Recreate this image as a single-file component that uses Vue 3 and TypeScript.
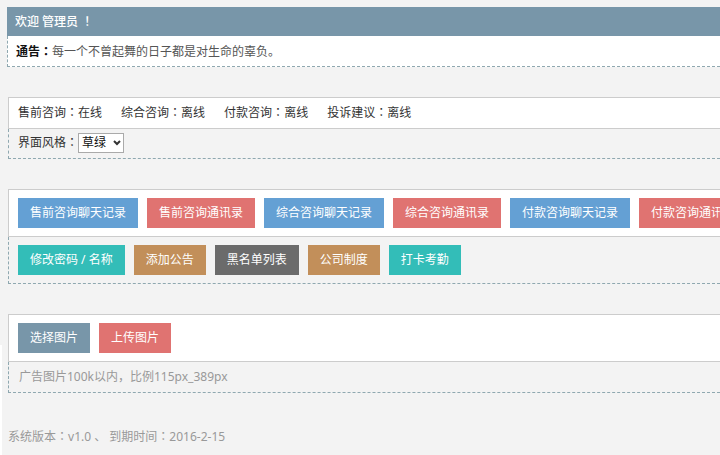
<script setup lang="ts">
import { ref } from 'vue'

interface Action {
  label: string
  tone: string
}

const theme = ref('草绿')
const themes: string[] = ['草绿', '天蓝']

const statuses: { name: string; state: string }[] = [
  { name: '售前咨询', state: '在线' },
  { name: '综合咨询', state: '离线' },
  { name: '付款咨询', state: '离线' },
  { name: '投诉建议', state: '离线' },
]

const records: Action[] = [
  { label: '售前咨询聊天记录', tone: 'blue' },
  { label: '售前咨询通讯录', tone: 'red' },
  { label: '综合咨询聊天记录', tone: 'blue' },
  { label: '综合咨询通讯录', tone: 'red' },
  { label: '付款咨询聊天记录', tone: 'blue' },
  { label: '付款咨询通讯录', tone: 'red' },
]

const tools: Action[] = [
  { label: '修改密码 / 名称', tone: 'teal' },
  { label: '添加公告', tone: 'brown' },
  { label: '黑名单列表', tone: 'gray' },
  { label: '公司制度', tone: 'brown' },
  { label: '打卡考勤', tone: 'teal' },
]

const uploads: Action[] = [
  { label: '选择图片', tone: 'slate' },
  { label: '上传图片', tone: 'red' },
]
</script>

<template>
  <main class="page">
    <section class="welcome">
      <h1 class="banner">欢迎 管理员 <span class="mark">！</span></h1>
      <p class="notice"><strong>通告<span class="mark">：</span></strong>每一个不曾起舞的日子都是对生命的辜负。</p>
    </section>

    <section class="panel">
      <div class="top statuses">
        <span v-for="s in statuses" :key="s.name">{{ s.name }}<span class="mark">：</span>{{ s.state }}</span>
      </div>
      <div class="bottom theme">
        <label for="theme">界面风格<span class="mark">：</span></label>
        <span class="picker">
          <select id="theme" v-model="theme">
            <option v-for="t in themes" :key="t">{{ t }}</option>
          </select>
          <svg class="chevron" viewBox="0 0 8 6" aria-hidden="true"><path d="M1 1 L4 4 L7 1" /></svg>
        </span>
      </div>
    </section>

    <section class="panel">
      <div class="top actions">
        <button v-for="a in records" :key="a.label" type="button" :class="['btn', a.tone]">{{ a.label }}</button>
      </div>
      <div class="bottom actions">
        <button v-for="a in tools" :key="a.label" type="button" :class="['btn', a.tone]">{{ a.label }}</button>
      </div>
    </section>

    <section class="panel">
      <div class="top actions">
        <button v-for="a in uploads" :key="a.label" type="button" :class="['btn', a.tone]">{{ a.label }}</button>
      </div>
      <p class="bottom hint">广告图片100k以内，比例115px_389px</p>
    </section>

    <footer class="footer">系统版本<span class="mark">：</span>v1.0 、 到期时间<span class="mark">：</span>2016-2-15</footer>
  </main>
</template>

<style>
body {
  margin: 0;
  background: #f3f3f3;
}
</style>

<style scoped>
.page {
  box-sizing: border-box;
  min-height: 100vh;
  padding: 7px 0 0 7px;
  overflow: hidden;
  background: linear-gradient(#fff, #fff) left bottom / 2px 110px no-repeat #f3f3f3;
  color: #333;
  font: 12px/18px "Noto Sans", "Noto Sans CJK SC", sans-serif;
}
.mark {
  font-family: "Noto Sans CJK TC", sans-serif;
  line-height: 1;
}
.welcome {
  background: #fff;
}
.banner {
  margin: 0;
  padding: 6px 8px 5px;
  background: #7896a9;
  color: #fff;
  font-size: 12px;
  font-weight: 500;
}
.notice {
  margin: 0;
  padding: 7px 8px 5px;
  border: dashed #8fa8b0;
  border-width: 0 0 1px 1px;
  color: #555;
}
.notice strong {
  color: #111;
}
.panel {
  margin: 30px 0 0 1px;
}
.top {
  padding: 8px;
  border: solid #ccc;
  border-width: 1px 0 1px 1px;
  background: #fff;
}
.bottom {
  margin: 0;
  padding: 8px;
  border: dashed #8fa8b0;
  border-width: 0 0 1px 1px;
}
.statuses {
  display: flex;
  gap: 19px;
  padding: 6px 9px;
}
.theme {
  display: flex;
  align-items: center;
  padding: 4px 9px 5px;
}
.picker {
  position: relative;
}
.picker select {
  display: block;
  appearance: none;
  box-sizing: border-box;
  width: 46px;
  height: 20px;
  padding: 0 3px;
  border: 1px solid #aaa;
  border-radius: 0;
  background: #fff;
  color: #111;
  font: inherit;
}
.chevron {
  position: absolute;
  top: 7px;
  right: 3px;
  width: 8px;
  height: 6px;
  fill: none;
  stroke: #333;
  stroke-width: 2;
  pointer-events: none;
}
.actions {
  display: flex;
  gap: 9px;
  padding: 8px 9px;
}
.btn {
  flex: none;
  padding: 6px 12px;
  border: 0;
  color: #fff;
  font: inherit;
  white-space: nowrap;
  cursor: pointer;
}
.blue { background: #64a0d4; }
.red { background: #e07371; }
.teal { background: #33bdb8; }
.brown { background: #c28f5a; }
.gray { background: #6b6b6b; }
.slate { background: #7896a9; }
.hint {
  padding: 6px 10px;
  color: #999;
}
.footer {
  padding: 35px 1px 8px;
  color: #999;
}
</style>
